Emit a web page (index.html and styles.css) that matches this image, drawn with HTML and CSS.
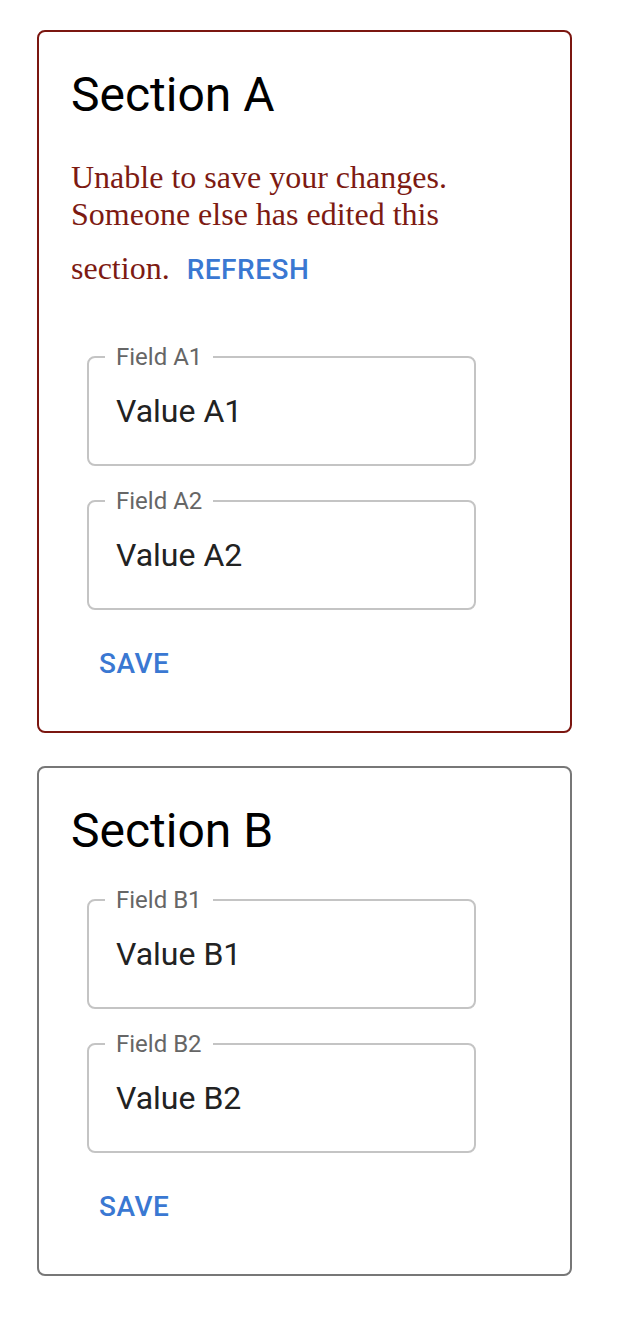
FILE: index.html
```html
<!DOCTYPE html>
<html lang="en">
<head>
<meta charset="utf-8">
<title>Sections</title>
<link rel="stylesheet" href="styles.css">
</head>
<body>
<main class="page">
  <section class="card card-error">
    <h2 class="card-title">Section A</h2>
    <p class="error-msg">Unable to save your changes. Someone else has edited this section. <button class="text-btn refresh-btn" type="button">Refresh</button></p>
    <div class="fields">
      <fieldset class="field">
        <legend class="field-label">Field A1</legend>
        <div class="field-value">Value A1</div>
      </fieldset>
      <fieldset class="field">
        <legend class="field-label">Field A2</legend>
        <div class="field-value">Value A2</div>
      </fieldset>
      <button class="text-btn save-btn" type="button">Save</button>
    </div>
  </section>

  <section class="card">
    <h2 class="card-title card-title-b">Section B</h2>
    <div class="fields">
      <fieldset class="field">
        <legend class="field-label">Field B1</legend>
        <div class="field-value">Value B1</div>
      </fieldset>
      <fieldset class="field">
        <legend class="field-label">Field B2</legend>
        <div class="field-value">Value B2</div>
      </fieldset>
      <button class="text-btn save-btn" type="button">Save</button>
    </div>
  </section>
</main>
</body>
</html>
```

FILE: styles.css
```css
* { box-sizing: border-box; }

html, body {
  margin: 0;
  padding: 0;
  background: #ffffff;
}

body {
  font-family: Roboto, "Liberation Sans", sans-serif;
}

.page {
  display: flex;
  flex-direction: column;
  gap: 33px;
  padding: 30px 0 40px 37px;
}

.card {
  width: 535px;
  border: 2px solid #777777;
  border-radius: 8px;
  padding: 35px 32px 31px 32px;
}

.card-error {
  border-color: #7b1610;
}

.card-title {
  margin: 0;
  font-family: Roboto, "Liberation Sans", sans-serif;
  font-size: 48px;
  font-weight: 400;
  line-height: 56px;
  color: #000000;
}

.card-title-b {
  margin-bottom: 29px;
}

.error-msg {
  margin: 36px 0 39px 0;
  font-family: "Liberation Serif", "Times New Roman", serif;
  font-size: 32px;
  line-height: 37px;
  color: #7d1a12;
}

.text-btn {
  display: inline-block;
  border: 0;
  background: transparent;
  padding: 20px 10px;
  margin: 0;
  font-family: Roboto, "Liberation Sans", sans-serif;
  font-size: 28px;
  font-weight: 500;
  line-height: 33px;
  letter-spacing: 0.5px;
  text-transform: uppercase;
  color: #3a78d2;
  cursor: pointer;
}

.refresh-btn {
  margin-left: -1px;
}

.fields {
  display: flex;
  flex-direction: column;
  align-items: flex-start;
  gap: 23px;
  padding-left: 17px;
}

.field {
  width: 389px;
  margin: 0 0 0 -1px;
  min-width: 0;
  padding: 0 27px 34px 27px;
  border: 2px solid #c4c4c4;
  border-radius: 8px;
}

.field-label {
  margin-left: -11px;
  padding: 0 11px;
  font-size: 24px;
  line-height: 24px;
  color: #666666;
}

.field-value {
  padding-top: 23px;
  font-size: 32px;
  line-height: 38px;
  color: #222222;
}

.save-btn {
  margin-top: -6px;
  padding: 20px 11px;
}
```
